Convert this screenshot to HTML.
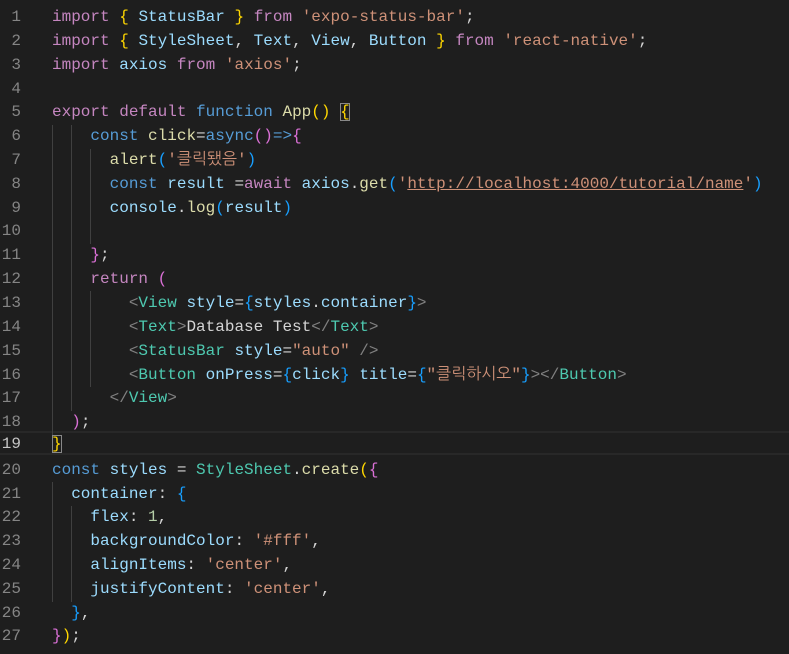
<!DOCTYPE html>
<html><head><meta charset="utf-8"><style>
body{margin:0;background:#1e1e1e;width:789px;height:654px;overflow:hidden;position:relative;font-family:"Liberation Mono","NanumGothic",monospace;font-size:16px}
.l{position:absolute;left:0;height:24px;line-height:24px;white-space:pre;width:789px}
.n{position:absolute;left:0;width:21px;text-align:right;color:#858585}
.c{position:absolute;left:52px;color:#d4d4d4}
.k{color:#c586c0}.b{color:#569cd6}.v{color:#9cdcfe}.f{color:#dcdcaa}.t{color:#4ec9b0}.s{color:#ce9178}.g{color:#808080}.num{color:#b5cea8}
.y{color:#ffd700}.p{color:#da70d6}.u{color:#179fff}
.ig{position:absolute;width:1px;background:#404040}
</style></head><body>
<div style="position:absolute;left:0;top:431px;width:789px;height:24px;border-top:2px solid #282828;border-bottom:2px solid #282828;box-sizing:border-box"></div>
<div class="ig" style="left:52px;top:125px;height:310px"></div>
<div class="ig" style="left:71px;top:125px;height:286px"></div>
<div class="ig" style="left:90px;top:149px;height:95px"></div>
<div class="ig" style="left:90px;top:291px;height:96px"></div>
<div class="ig" style="left:52px;top:482px;height:120px"></div>
<div class="ig" style="left:71px;top:506px;height:96px"></div>
<div class="l" style="top:5px"><span class="n">1</span><span class="c"><span class="k">import</span> <span class="y">{</span> <span class="v">StatusBar</span> <span class="y">}</span> <span class="k">from</span> <span class="s">'expo-status-bar'</span>;</span></div>
<div class="l" style="top:29px"><span class="n">2</span><span class="c"><span class="k">import</span> <span class="y">{</span> <span class="v">StyleSheet</span>, <span class="v">Text</span>, <span class="v">View</span>, <span class="v">Button</span> <span class="y">}</span> <span class="k">from</span> <span class="s">'react-native'</span>;</span></div>
<div class="l" style="top:53px"><span class="n">3</span><span class="c"><span class="k">import</span> <span class="v">axios</span> <span class="k">from</span> <span class="s">'axios'</span>;</span></div>
<div class="l" style="top:77px"><span class="n">4</span></div>
<div class="l" style="top:100px"><span class="n">5</span><span class="c"><span class="k">export</span> <span class="k">default</span> <span class="b">function</span> <span class="f">App</span><span class="y">()</span> <span class="y" style="outline:1px solid #888;outline-offset:-1px">{</span></span></div>
<div class="l" style="top:124px"><span class="n">6</span><span class="c">    <span class="b">const</span> <span class="f">click</span>=<span class="b">async</span><span class="p">()</span><span class="b">=&gt;</span><span class="p">{</span></span></div>
<div class="l" style="top:148px"><span class="n">7</span><span class="c">      <span class="f">alert</span><span class="u">(</span><span class="s">'클릭됐음'</span><span class="u">)</span></span></div>
<div class="l" style="top:172px"><span class="n">8</span><span class="c">      <span class="b">const</span> <span class="v">result</span> =<span class="k">await</span> <span class="v">axios</span>.<span class="f">get</span><span class="u">(</span><span class="s">'<u>http://localhost:4000/tutorial/name</u>'</span><span class="u">)</span></span></div>
<div class="l" style="top:196px"><span class="n">9</span><span class="c">      <span class="v">console</span>.<span class="f">log</span><span class="u">(</span><span class="v">result</span><span class="u">)</span></span></div>
<div class="l" style="top:219px"><span class="n">10</span></div>
<div class="l" style="top:243px"><span class="n">11</span><span class="c">    <span class="p">}</span>;</span></div>
<div class="l" style="top:267px"><span class="n">12</span><span class="c">    <span class="k">return</span> <span class="p">(</span></span></div>
<div class="l" style="top:291px"><span class="n">13</span><span class="c">        <span class="g">&lt;</span><span class="t">View</span> <span class="v">style</span>=<span class="u">{</span><span class="v">styles</span>.<span class="v">container</span><span class="u">}</span><span class="g">&gt;</span></span></div>
<div class="l" style="top:315px"><span class="n">14</span><span class="c">        <span class="g">&lt;</span><span class="t">Text</span><span class="g">&gt;</span>Database Test<span class="g">&lt;/</span><span class="t">Text</span><span class="g">&gt;</span></span></div>
<div class="l" style="top:339px"><span class="n">15</span><span class="c">        <span class="g">&lt;</span><span class="t">StatusBar</span> <span class="v">style</span>=<span class="s">"auto"</span> <span class="g">/&gt;</span></span></div>
<div class="l" style="top:363px"><span class="n">16</span><span class="c">        <span class="g">&lt;</span><span class="t">Button</span> <span class="v">onPress</span>=<span class="u">{</span><span class="v">click</span><span class="u">}</span> <span class="v">title</span>=<span class="u">{</span><span class="s">"클릭하시오"</span><span class="u">}</span><span class="g">&gt;&lt;/</span><span class="t">Button</span><span class="g">&gt;</span></span></div>
<div class="l" style="top:386px"><span class="n">17</span><span class="c">      <span class="g">&lt;/</span><span class="t">View</span><span class="g">&gt;</span></span></div>
<div class="l" style="top:410px"><span class="n">18</span><span class="c">  <span class="p">)</span>;</span></div>
<div class="l" style="top:432px"><span class="n" style="color:#c6c6c6">19</span><span class="c"><span class="y" style="outline:1px solid #888;outline-offset:-1px">}</span></span></div>
<div class="l" style="top:458px"><span class="n">20</span><span class="c"><span class="b">const</span> <span class="v">styles</span> = <span class="t">StyleSheet</span>.<span class="f">create</span><span class="y">(</span><span class="p">{</span></span></div>
<div class="l" style="top:482px"><span class="n">21</span><span class="c">  <span class="v">container</span>: <span class="u">{</span></span></div>
<div class="l" style="top:505px"><span class="n">22</span><span class="c">    <span class="v">flex</span>: <span class="num">1</span>,</span></div>
<div class="l" style="top:529px"><span class="n">23</span><span class="c">    <span class="v">backgroundColor</span>: <span class="s">'#fff'</span>,</span></div>
<div class="l" style="top:553px"><span class="n">24</span><span class="c">    <span class="v">alignItems</span>: <span class="s">'center'</span>,</span></div>
<div class="l" style="top:577px"><span class="n">25</span><span class="c">    <span class="v">justifyContent</span>: <span class="s">'center'</span>,</span></div>
<div class="l" style="top:601px"><span class="n">26</span><span class="c">  <span class="u">}</span>,</span></div>
<div class="l" style="top:624px"><span class="n">27</span><span class="c"><span class="p">}</span><span class="y">)</span>;</span></div>
</body></html>
